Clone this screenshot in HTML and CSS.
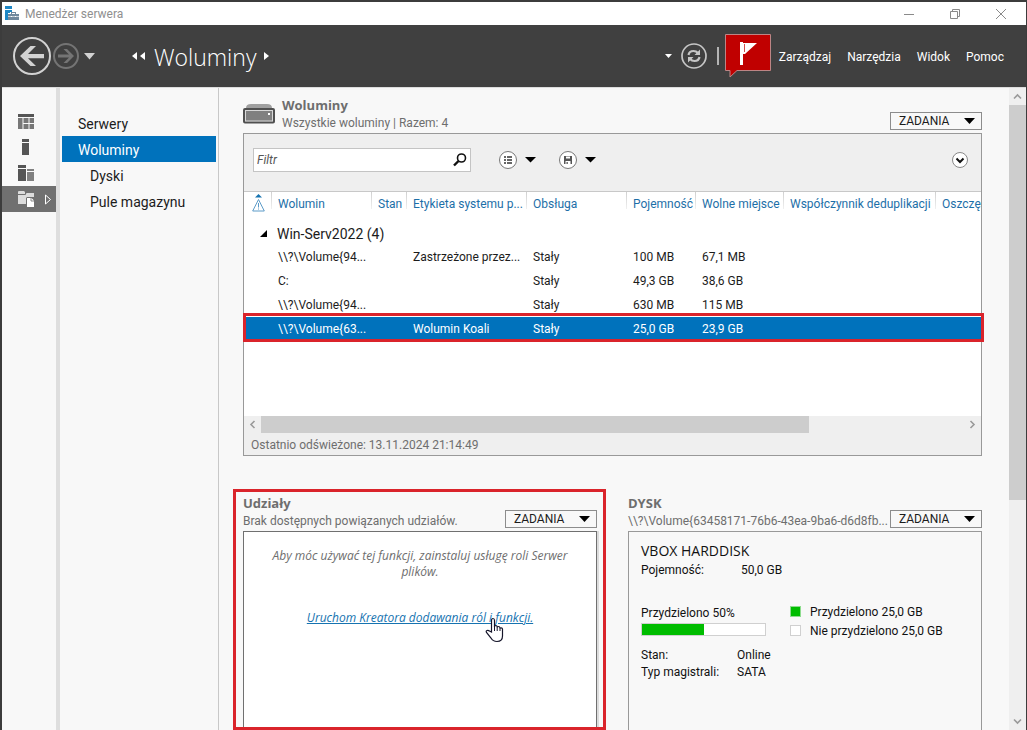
FILE: index.html
```html
<!DOCTYPE html>
<html lang="pl">
<head>
<meta charset="utf-8">
<meta name="viewport" content="width=device-width, initial-scale=1">
<title>Menedżer serwera</title>
<link rel="stylesheet" href="styles.css">
</head>
<body>
<div class="window">
  <header class="titlebar">
    <svg class="app-icon" width="15" height="15" viewBox="0 0 15 15"><path d="M0 0h7v3H0zM0 4h7v2H5v1H3v7H0z" fill="#1e87c5"/><path d="M6 8V6h5v2h3v6H3V8zM7 8h3V7H7z" fill="#71889c"/><path d="M3 10.500h11" stroke="#fff" stroke-width=".6"/><path d="M6 10h1v1H6zM10 10h1v1h-1z" fill="#fff"/></svg>
    <span class="app-name">Menedżer serwera</span>
    <div class="window-buttons">
      <button type="button" aria-label="Minimalizuj"><svg width="12" height="12" viewBox="0 0 12 12"><path d="M1 6.500h10"/></svg></button>
      <button type="button" aria-label="Przywróć"><svg width="12" height="12" viewBox="0 0 12 12"><path d="M1.500 3.500h7v7h-7zM3.500 3.500v-2h7v7h-2"/></svg></button>
      <button type="button" aria-label="Zamknij"><svg width="12" height="12" viewBox="0 0 12 12"><path d="M1 1l10 10M11 1L1 11"/></svg></button>
    </div>
  </header>

  <div class="navbar">
    <button class="plain" type="button" aria-label="Wstecz"><svg width="38" height="38" viewBox="0 0 38 38"><circle cx="19" cy="19" r="18" fill="none" stroke="#d2d2d2" stroke-width="2"/><path d="M7 19L17.500 9h5.500l-8 8H31v4.200H15l8 7.800h-5.500z" fill="#d2d2d2"/></svg></button>
    <button class="plain forward" type="button" aria-label="Dalej"><svg width="26" height="26" viewBox="0 0 26 26"><circle cx="13" cy="13" r="12" fill="none" stroke="#747474" stroke-width="2"/><path d="M21 13l-7-7h-3.500l5.500 5.600H5v2.800h11L10.500 20H14z" fill="#747474"/></svg></button>
    <button class="plain history" type="button" aria-label="Historia"><svg width="12" height="7" viewBox="0 0 12 7"><path d="M0 0h11L5.500 6.500z" fill="#d2d2d2"/></svg></button>
    <nav class="crumbs" aria-label="Ścieżka">
      <svg width="14" height="10" viewBox="0 0 14 10"><path d="M5 1v8L0 5zM13 1v8L8 5z" fill="#fff"/></svg>
      <h1>Woluminy</h1>
      <svg width="6" height="10" viewBox="0 0 6 10"><path d="M0 1l5 4-5 4z" fill="#fff"/></svg>
    </nav>
    <div class="tools">
      <button class="plain" type="button" aria-label="Opcje odświeżania"><svg width="8" height="5" viewBox="0 0 8 5"><path d="M0 0h7L3.500 4z" fill="#fff"/></svg></button>
      <button class="plain" type="button" aria-label="Odśwież"><svg width="26" height="26" viewBox="0 0 26 26"><circle cx="13" cy="13" r="12" fill="none" stroke="#c6c6c6" stroke-width="1.700"/><path d="M7.500 12c.5-3 2.500-4 5-4 2 0 3 .4 4.500 2M18.500 14c-.5 3-2.500 4-5 4-2 0-3-.4-4.500-2" fill="none" stroke="#c6c6c6" stroke-width="2.200"/><path d="M19 6.500v5.500h-5.500zM7 19.500V14h5.500z" fill="#c6c6c6"/></svg></button>
      <span class="separator"></span>
      <button class="plain flag" type="button" aria-label="Powiadomienia"><svg width="46" height="46" viewBox="0 0 46 46"><path d="M.5 1.500h45v36H12L5 44v-6.500H.5z" fill="#c00000" stroke="#bd8585"/><path d="M15 9h3v23h-3zM18 10h14L20 21h-2z" fill="#fff"/><path d="M19.500 11v8" stroke="#c00000" stroke-width=".7"/></svg></button>
      <button class="menu" type="button">Zarządzaj</button>
      <button class="menu" type="button">Narzędzia</button>
      <button class="menu" type="button">Widok</button>
      <button class="menu" type="button">Pomoc</button>
    </div>
  </div>

  <div class="workspace">
    <nav class="rail" aria-label="Widoki">
      <a href="#pulpit" aria-label="Pulpit nawigacyjny"><svg width="16" height="15" viewBox="0 0 16 15"><path d="M0 0h16v3H0z" fill="#555"/><path d="M0 4h4.500v11H0zM5.500 4h5v5h-5zM11.500 4H16v5h-4.500zM5.500 10h5v5h-5zM11.500 10H16v5h-4.500z" fill="#777"/></svg></a>
      <a href="#lokalny" aria-label="Serwer lokalny"><svg width="16" height="16" viewBox="0 0 16 16"><path d="M4 0h7v3H4zM4 4h7v12H4z" fill="#555"/></svg></a>
      <a href="#wszystkie" aria-label="Wszystkie serwery"><svg width="16" height="16" viewBox="0 0 16 16"><path d="M0 0h8v3H0zM0 4h8v12H0z" fill="#555"/><path d="M9 4h7v2H9zM9 7h7v9H9z" fill="#808080"/></svg></a>
      <a class="current" href="#pliki" aria-label="Usługi plików i magazynowania"><svg width="36" height="16" viewBox="0 0 36 16"><path d="M0 1q0-1 1-1h5l1 1v2H0zM0 4h7.500l1-2H16v4H9L8 7v6H0z" fill="#dcdcdc"/><path d="M9 7h4.500L16 9.500V16H9z" fill="#fff"/><path d="M13 7v3h3" fill="none" stroke="#707070" stroke-width=".8"/><path d="M27.500 4v9L32.500 8.500z" fill="none" stroke="#fff"/></svg></a>
    </nav>

    <nav class="sidebar" aria-label="Usługi magazynowania">
      <a href="#serwery">Serwery</a>
      <a class="current" href="#woluminy" aria-current="page">Woluminy</a>
      <a class="nested" href="#dyski">Dyski</a>
      <a class="nested" href="#pule">Pule magazynu</a>
    </nav>

    <main class="content">
      <section class="tile">
        <div class="tile-head with-icon">
          <svg class="drive" width="32" height="20" viewBox="0 0 32 20"><path d="M3 4q0-4 5-4h16q5 0 5 4z" fill="#a0a0a0"/><rect x="1" y="5" width="30" height="13.500" rx="1" fill="#808080" stroke="#505050" stroke-width="2"/><rect x="2.500" y="6.500" width="27" height="10.500" fill="none" stroke="#d8d8d8"/><path d="M25 9h2v2h-2z" fill="#fff"/></svg>
          <div class="heading"><h2>Woluminy</h2><p>Wszystkie woluminy | Razem: 4</p></div>
          <button class="tasks" type="button">ZADANIA <svg width="11" height="6" viewBox="0 0 11 6"><path d="M0 0h11L5.500 6z"/></svg></button>
        </div>
        <div class="panel">
          <div class="toolbar">
            <div class="filter">
              <input type="text" placeholder="Filtr" aria-label="Filtr">
              <button class="plain" type="button" aria-label="Szukaj"><svg width="14" height="14" viewBox="0 0 14 14"><circle cx="8.500" cy="5" r="4" fill="none" stroke="#111" stroke-width="1.600"/><path d="M5.500 8L1 12.500" stroke="#111" stroke-width="2.400"/></svg></button>
            </div>
            <button class="plain picker" type="button" aria-label="Kryteria">
              <svg width="18" height="18" viewBox="0 0 18 18"><circle cx="9" cy="9" r="8.500" fill="#fff" stroke="#777"/><path d="M5 5h2v2H5zM5 8h2v2H5zM5 11h2v2H5zM8 5h5v2H8zM8 8h5v2H8zM8 11h5v2H8z" fill="#666"/></svg>
              <svg width="11" height="6" viewBox="0 0 11 6"><path d="M0 0h11L5.500 5.500z"/></svg>
            </button>
            <button class="plain picker" type="button" aria-label="Zapisane zapytania">
              <svg width="18" height="18" viewBox="0 0 18 18"><circle cx="9" cy="9" r="8.500" fill="#fff" stroke="#777"/><path d="M5 5h8v8h-1.500v-3h-5v3H5z" fill="#555"/><path d="M7 5.500h4v2H7z" fill="#fff"/><path d="M7.500 11h1.300v2H7.500z" fill="#555"/></svg>
              <svg width="11" height="6" viewBox="0 0 11 6"><path d="M0 0h11L5.500 5.500z"/></svg>
            </button>
            <button class="plain expand" type="button" aria-label="Rozwiń"><svg width="16" height="16" viewBox="0 0 16 16"><circle cx="8" cy="8" r="7.500" fill="#fff" stroke="#888"/><path d="M4.500 6.500L8 10l3.500-3.500" fill="none" stroke="#111" stroke-width="2"/></svg></button>
          </div>
          <div class="table-area">
            <table class="volumes">
              <colgroup><col class="c-alert"><col class="c-volume"><col class="c-state"><col class="c-label"><col class="c-prov"><col class="c-cap"><col class="c-free"><col class="c-dedup"><col></colgroup>
              <thead>
                <tr>
                  <th class="alert" aria-label="Ostrzeżenie"><svg width="13" height="18" viewBox="0 0 13 18"><path d="M3 3.500L6.500 0 10 3.500z" fill="#1673b0"/><path d="M6.500 5.500L12.300 17H.7z" fill="#fff" stroke="#5c9bc8"/><path d="M6.500 9v4.500M6.500 14.500v1" stroke="#5c9bc8"/></svg></th>
                  <th>Wolumin</th><th>Stan</th><th>Etykieta systemu p...</th><th>Obsługa</th><th>Pojemność</th><th>Wolne miejsce</th><th>Współczynnik deduplikacji</th><th><span class="clipped">Oszczęd</span></th>
                </tr>
              </thead>
              <tbody>
                <tr class="group"><td class="twisty"><svg width="7" height="7" viewBox="0 0 7 7"><path d="M7 0v7H0z"/></svg></td><td colspan="8">Win-Serv2022 (4)</td></tr>
                <tr><td></td><td>\\?\Volume{94...</td><td></td><td>Zastrzeżone przez...</td><td>Stały</td><td>100 MB</td><td>67,1 MB</td><td></td><td></td></tr>
                <tr><td></td><td>C:</td><td></td><td></td><td>Stały</td><td>49,3 GB</td><td>38,6 GB</td><td></td><td></td></tr>
                <tr><td></td><td>\\?\Volume{94...</td><td></td><td></td><td>Stały</td><td>630 MB</td><td>115 MB</td><td></td><td></td></tr>
                <tr class="selected"><td></td><td>\\?\Volume{63...</td><td></td><td>Wolumin Koali</td><td>Stały</td><td>25,0 GB</td><td>23,9 GB</td><td></td><td></td></tr>
              </tbody>
            </table>
          </div>
          <div class="hscroll">
            <button class="plain" type="button" aria-label="Przewiń w lewo"><svg width="7" height="9" viewBox="0 0 7 9"><path d="M5.500 1L2 4.500 5.500 8"/></svg></button>
            <div class="track"><div class="thumb"></div></div>
            <button class="plain" type="button" aria-label="Przewiń w prawo"><svg width="7" height="9" viewBox="0 0 7 9"><path d="M1.500 1L5 4.500 1.500 8"/></svg></button>
          </div>
          <p class="refreshed">Ostatnio odświeżone: 13.11.2024 21:14:49</p>
        </div>
      </section>

      <div class="tiles">
        <section class="tile marked">
          <div class="tile-head">
            <div class="heading"><h2>Udziały</h2><p>Brak dostępnych powiązanych udziałów.</p></div>
            <button class="tasks" type="button">ZADANIA <svg width="11" height="6" viewBox="0 0 11 6"><path d="M0 0h11L5.500 6z"/></svg></button>
          </div>
          <div class="panel shares">
            <p>Aby móc używać tej funkcji, zainstaluj usługę roli Serwer plików.</p>
            <a class="wizard" href="#kreator">Uruchom Kreatora dodawania ról i funkcji.<svg class="pointer" width="20" height="26" viewBox="0 0 20 26"><path d="M6.500 15V3.500q0-2 1.500-2t1.500 2V10q0-1.500 1.300-1.500T12.200 10v.8q0-1.300 1.300-1.300t1.500 1.500v.8q0-1 1.200-1T17.500 12v7q0 5.500-5.500 5.500-4 0-6-3.500L1.500 15.500q-.8-1.500.5-2t2.500.5z" fill="#fff" stroke="#15152a" stroke-width="1.200"/><path d="M9.500 10v4M12.200 10.500V14M15 11.500V14" stroke="#15152a"/></svg></a>
          </div>
        </section>

        <section class="tile">
          <div class="tile-head">
            <div class="heading"><h2>DYSK</h2><p>\\?\Volume{63458171-76b6-43ea-9ba6-d6d8fb...</p></div>
            <button class="tasks" type="button">ZADANIA <svg width="11" height="6" viewBox="0 0 11 6"><path d="M0 0h11L5.500 6z"/></svg></button>
          </div>
          <div class="panel disk">
            <h3>VBOX HARDDISK</h3>
            <dl class="facts capacity"><dt>Pojemność:</dt><dd>50,0 GB</dd></dl>
            <div class="usage">
              <div class="meter">
                <label for="allocated">Przydzielono 50%</label>
                <progress id="allocated" max="100" value="50"></progress>
              </div>
              <ul class="legend">
                <li><span class="swatch used"></span>Przydzielono 25,0 GB</li>
                <li><span class="swatch"></span>Nie przydzielono 25,0 GB</li>
              </ul>
            </div>
            <dl class="facts"><dt>Stan:</dt><dd>Online</dd><dt>Typ magistrali:</dt><dd>SATA</dd></dl>
          </div>
        </section>
      </div>
    </main>

    <div class="vscroll">
      <button class="plain" type="button" aria-label="Przewiń w górę"><svg width="9" height="7" viewBox="0 0 9 7"><path d="M1 5.500L4.500 2 8 5.500"/></svg></button>
      <div class="track"><div class="thumb"></div></div>
      <button class="plain" type="button" aria-label="Przewiń w dół"><svg width="9" height="7" viewBox="0 0 9 7"><path d="M1 1.500L4.500 5 8 1.500"/></svg></button>
    </div>
  </div>
</div>
</body>
</html>
```

FILE: styles.css
```css
* { box-sizing: border-box; }

body {
  margin: 0;
  background: #f8f8f8;
  color: #1c1c1c;
  font: 12px/18px Roboto, "Open Sans", "Noto Sans", sans-serif;
}

h1, h2, h3, p, dl, dd, ul { margin: 0; padding: 0; }
h1, h2, h3, .shares { font-family: "Open Sans", "Noto Sans", sans-serif; }
ul { list-style: none; }
svg { display: block; flex: none; }
button, input { font: inherit; color: inherit; }
button { padding: 0; }
a { color: inherit; text-decoration: none; }

.plain {
  display: flex;
  align-items: center;
  justify-content: center;
  border: 0;
  background: none;
}

.window {
  display: flex;
  flex-direction: column;
  min-height: 100vh;
  border: solid #3c3c3c;
  border-width: 2px 1px 0 2px;
}

/* Title bar */
.titlebar {
  display: flex;
  align-items: center;
  height: 23px;
  padding: 0 2px 0 3px;
  background: #fff;
  color: #8f8f8f;
}
.app-name { flex: 1; padding-left: 5px; }
.window-buttons { display: flex; }
.window-buttons button {
  display: flex;
  align-items: center;
  justify-content: center;
  width: 46px;
  height: 20px;
  border: 0;
  background: none;
}
.window-buttons svg { fill: none; stroke: #8a8a8a; }

/* Navigation bar */
.navbar {
  display: flex;
  align-items: center;
  height: 62px;
  padding: 0 22px 0 11px;
  background: #404040;
  color: #fff;
}
.forward { margin-left: 2px; }
.history { margin-left: 5px; }
.crumbs {
  display: flex;
  flex: 1;
  align-items: center;
  gap: 8px;
  padding-left: 36px;
}
.crumbs h1 { padding-top: 2px; font-size: 23px; font-weight: 300; line-height: 32px; }
.tools { display: flex; align-items: center; }
.tools .plain { margin-right: 8px; }
.separator { width: 2px; height: 18px; margin: 0 6px 0 2px; background: #b4b4b4; }
.menu { margin-right: 16px; padding-top: 2px; border: 0; background: none; }
.menu:last-child { margin-right: 0; }

/* Workspace */
.workspace {
  display: flex;
  flex: 1;
  border-top: 1px solid #dcdcdc;
}
.rail {
  width: 58px;
  flex: none;
  padding-top: 20px;
  border-right: 4px solid #dedede;
}
.rail a { display: flex; align-items: center; height: 26px; padding-left: 16px; }
.rail .current { background: #707070; }

.sidebar {
  width: 159px;
  flex: none;
  padding: 22px 2px 0;
  border-right: 1px solid #c8c8c8;
  font-size: 14px;
}
.sidebar a { display: block; height: 26px; padding-left: 16px; line-height: 28px; }
.sidebar .nested { padding-left: 28px; }
.sidebar .current { background: #0072bc; color: #fff; }

.content {
  display: flex;
  flex: 1;
  flex-direction: column;
  gap: 38px;
  min-width: 0;
  padding: 8px 27px 0 24px;
}

/* Tiles */
.tile { display: flex; flex-direction: column; position: relative; min-width: 0; }
.tile-head {
  display: flex;
  align-items: flex-end;
  gap: 4px;
  height: 37px;
  padding-bottom: 3px;
}
.with-icon { gap: 7px; }
.drive { margin-bottom: 6px; }
.heading { flex: 1; min-width: 0; height: 100%; color: #6e6e6e; }
.heading h2 { font-size: 13px; line-height: 18px; font-weight: 700; }
.heading p { white-space: nowrap; }
.heading h2, .heading p { height: 18px; }
.tasks {
  display: flex;
  align-items: center;
  justify-content: space-between;
  width: 92px;
  height: 18px;
  flex: none;
  padding: 0 6px 0 8px;
  border: 1px solid #8c8c8c;
  background: #f8f8f8;
}
.panel { border: 1px solid #999; }

.toolbar {
  display: flex;
  align-items: flex-start;
  height: 58px;
  padding: 14px 13px 0 9px;
  border-bottom: 1px solid #c8c8c8;
  background: #efefef;
}
.filter {
  display: flex;
  width: 218px;
  height: 24px;
  padding-right: 3px;
  border: 1px solid #c4c4c4;
  background: #fff;
}
.filter input {
  flex: 1;
  min-width: 0;
  padding: 0 3px;
  border: 0;
  background: none;
  font-style: italic;
}
.filter input::placeholder { color: #555; opacity: 1; }
.picker { gap: 8px; height: 24px; margin-left: 28px; }
.picker + .picker { margin-left: 23px; }
.expand { height: 24px; margin-left: auto; }

/* Volume table */
.table-area { min-height: 224px; background: #fff; }
.volumes {
  width: 100%;
  table-layout: fixed;
  border-spacing: 0;
}
.c-alert { width: 27px; }
.c-volume { width: 100px; }
.c-state { width: 35px; }
.c-label { width: 120px; }
.c-prov { width: 100px; }
.c-cap { width: 69px; }
.c-free { width: 88px; }
.c-dedup { width: 152px; }
.volumes th, .volumes td {
  height: 24px;
  padding: 0 0 0 7px;
  text-align: left;
  white-space: nowrap;
}
.volumes th {
  height: 30px;
  padding-top: 3px;
  background: linear-gradient(#d0d0d0, #f0f0f0) left top / 1px 17px no-repeat;
  color: #1d6fa8;
  font-weight: 400;
  vertical-align: top;
}
.clipped { display: block; overflow: hidden; }
.volumes .alert { background: none; padding-left: 8px; padding-top: 2px; }
.volumes .group td { height: 23px; padding-left: 6px; font-size: 14px; }
.volumes .group .twisty { padding-left: 16px; }
.selected { position: relative; background: #0072bc; color: #fff; }
.selected td:first-child::after {
  content: "";
  position: absolute;
  inset: -4px -3px -1px -1px;
  border: 3px solid #da242b;
}

/* Scroll bars */
.hscroll, .vscroll { display: flex; background: #efefef; }
.hscroll { height: 17px; }
.vscroll { flex: none; flex-direction: column; width: 17px; }
.hscroll button, .vscroll button { width: 17px; height: 17px; flex: none; }
.hscroll .plain svg, .vscroll .plain svg { fill: none; stroke: #9a9a9a; stroke-width: 1.6; }
.track { flex: 1; }
.thumb { background: #cdcdcd; }
.hscroll .thumb { width: 78%; height: 17px; }
.vscroll .track { display: flex; flex-direction: column; }
.vscroll .thumb { flex: 0 0 65%; }
.refreshed { height: 22px; padding: 3px 7px; background: #efefef; color: #6e6e6e; }

/* Lower tiles */
.tiles {
  display: grid;
  grid-template-columns: 1fr 1fr;
  flex: 1;
  gap: 31px;
}
.tiles .panel { flex: 1; border-bottom: 0; }
.marked::after {
  content: "";
  position: absolute;
  inset: -5px -9px 0 -10px;
  border: 3px solid #da242b;
  pointer-events: none;
}
.shares {
  padding: 16px 24px 0;
  background: #fff;
  box-shadow: 2px 0 0 #dcdcdc;
  color: #6e6e6e;
  font-style: italic;
  line-height: 16px;
  text-align: center;
}
.tiles .shares { border-color: #707070; }
.wizard {
  display: inline-block;
  position: relative;
  margin-top: 30px;
  color: #1673b0;
  text-decoration: underline;
}
.pointer { position: absolute; right: 28px; top: 7px; }

.disk { padding: 10px 12px 0; color: #111; }
.disk h3 { font-size: 14px; line-height: 18px; font-weight: 400; }
.facts { display: grid; grid-template-columns: 96px 1fr; line-height: 17px; }
.capacity { grid-template-columns: 100px 1fr; padding-top: 2px; }
.usage { display: flex; gap: 24px; padding: 23px 0 7px; }
.meter { display: flex; flex-direction: column; gap: 1px; width: 125px; padding-top: 2px; }
progress {
  width: 100%;
  height: 13px;
  border: 1px solid #d0d0d0;
  appearance: none;
  background: #fff;
}
progress::-webkit-progress-bar { background: #fff; }
progress::-webkit-progress-value { background: #00bd00; }
.legend li { display: flex; align-items: center; gap: 9px; height: 19px; }
.swatch { width: 11px; height: 11px; border: 1px solid #d0d0d0; background: #fff; }
.used { background: #00bd00; border-color: #8fdc8f; }
```
